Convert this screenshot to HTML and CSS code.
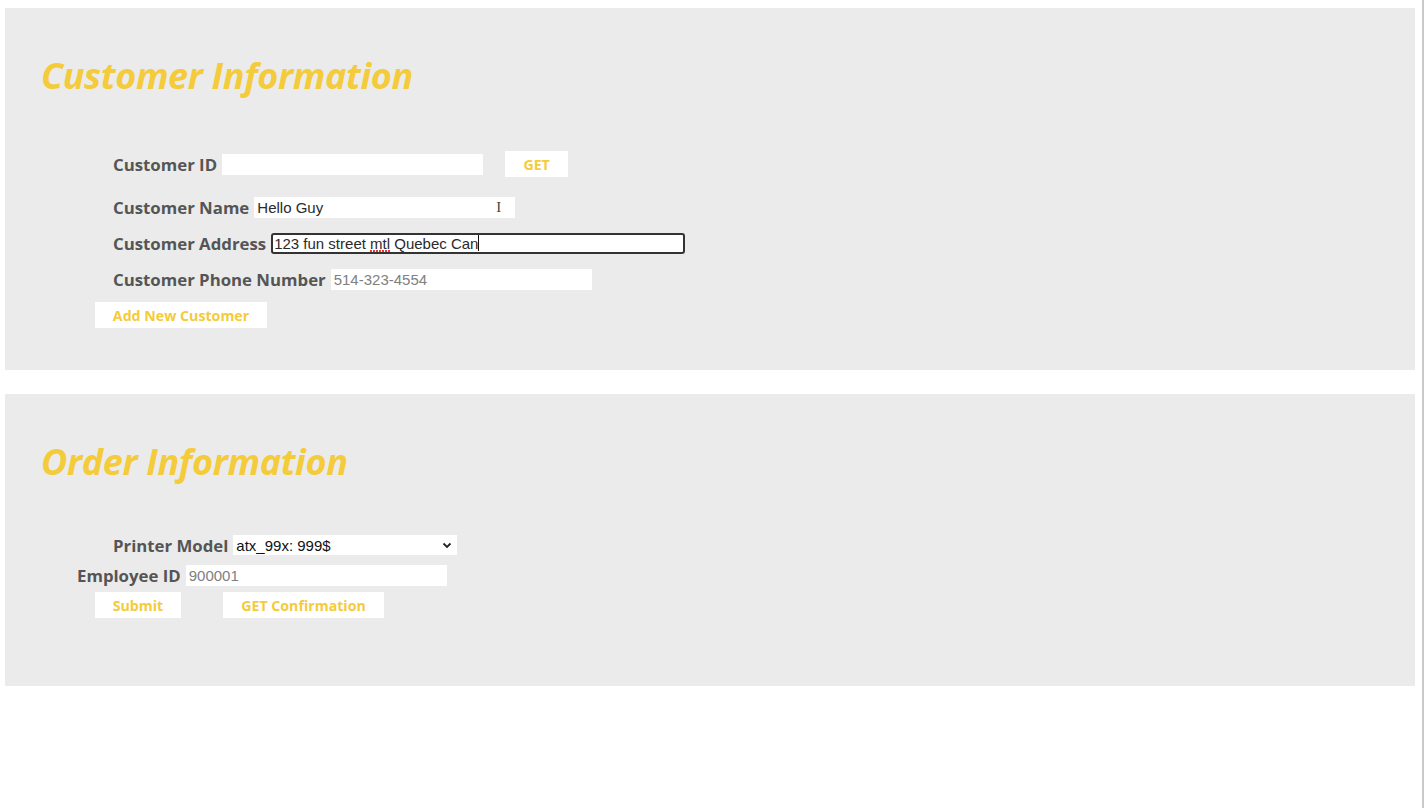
FILE: index.html
```html
<!DOCTYPE html>
<html>
<head>
<meta charset="utf-8">
<link rel="stylesheet" href="styles.css">
</head>
<body>
<div class="page">
  <section class="panel panel-customer">
    <h1 class="title">Customer Information</h1>
    <div class="form">
      <div class="row row-id">
        <label class="label">Customer ID</label>
        <input class="field" type="text">
        <button class="btn btn-get">GET</button>
      </div>
      <div class="row">
        <label class="label">Customer Name</label>
        <input class="field" type="text" value="Hello Guy">
        <span class="cursor">I</span>
      </div>
      <div class="row">
        <label class="label">Customer Address</label>
        <div class="field field-focus"><span class="txt">123 fun street&nbsp;</span><span class="spell">mtl</span><span class="txt">&nbsp;Quebec Can</span><span class="caret"></span></div>
      </div>
      <div class="row">
        <label class="label">Customer Phone Number</label>
        <input class="field" type="text" placeholder="514-323-4554">
      </div>
      <div class="row row-btn">
        <button class="btn btn-add">Add New Customer</button>
      </div>
    </div>
  </section>
  <section class="panel panel-order">
    <h1 class="title">Order Information</h1>
    <div class="form">
      <div class="row">
        <label class="label">Printer Model</label>
        <div class="select"><span>atx_99x: 999$</span>
          <svg class="chev" width="10" height="7" viewBox="0 0 10 7"><path d="M1.5 1.5 L5 5 L8.5 1.5" fill="none" stroke="#222" stroke-width="1.8"/></svg>
        </div>
      </div>
      <div class="row row-emp">
        <label class="label">Employee ID</label>
        <input class="field" type="text" placeholder="900001">
      </div>
      <div class="row row-btns">
        <button class="btn btn-submit">Submit</button>
        <button class="btn btn-confirm">GET Confirmation</button>
      </div>
    </div>
  </section>
</div>
</body>
</html>
```
FILE: styles.css
```css
html, body {
  margin: 0;
  padding: 0;
  background: #ffffff;
}
body {
  font-family: "Open Sans", "Noto Sans", sans-serif;
  width: 1424px;
  height: 808px;
  overflow: hidden;
}
.page {
  box-sizing: border-box;
  width: 1424px;
  height: 808px;
  padding: 8px 7px 0 5px;
  border-right: 2px solid #c9c9c9;
  display: flex;
  flex-direction: column;
  gap: 24px;
}
.panel {
  background: #ebebeb;
  box-sizing: border-box;
  padding: 0 0 0 36px;
}
.panel-customer { height: 362px; padding-top: 45px; }
.panel-order { height: 292px; padding-top: 45px; }
.title {
  margin: 0;
  font-family: "Open Sans", "Noto Sans", sans-serif;
  font-style: italic;
  font-weight: 700;
  font-size: 36px;
  line-height: 46px;
  color: #f4cb3a;
  letter-spacing: -0.35px;
}
.form {
  display: flex;
  flex-direction: column;
}
.panel-customer .form { margin-top: 47px; }
.panel-order .form { margin-top: 45px; }
.row {
  display: flex;
  align-items: center;
  padding-left: 72px;
  height: 36px;
}
.row-id { height: 36px; margin-bottom: 7px; }
.label {
  font-weight: 700;
  font-size: 16.8px;
  color: #555555;
  margin-right: 5px;
  white-space: nowrap;
}
.field {
  box-sizing: border-box;
  width: 261px;
  height: 21px;
  border: none;
  background: #ffffff;
  font-family: "Liberation Sans", Arial, sans-serif;
  font-size: 15px;
  color: #2a2a2a;
  padding: 0 3px;
  outline: none;
}
.field::placeholder { color: #808080; }
.field-focus {
  width: 414px;
  border: 2px solid #333;
  border-radius: 3px;
  display: flex;
  align-items: center;
  padding: 0 1px;
  white-space: pre;
}
.txt { line-height: 17px; }
.spell {
  line-height: 17px;
  padding-bottom: 0;
  background-image: radial-gradient(circle at 1px 1px, #e33 0.9px, transparent 1.1px);
  background-size: 3px 2px;
  background-repeat: repeat-x;
  background-position: 0 100%;
}
.caret {
  display: inline-block;
  width: 1px;
  height: 16px;
  background: #111;
}
.cursor {
  margin-left: -19px;
  font-family: "Liberation Serif", serif;
  font-size: 15px;
  color: #444;
  width: 19px;
}
.btn {
  border: none;
  background: #ffffff;
  font-family: "Open Sans", "Noto Sans", sans-serif;
  font-weight: 700;
  font-size: 14.2px;
  color: #f4cb3a;
  height: 26px;
  padding: 0;
  cursor: pointer;
}
.btn-get { width: 63px; margin-left: 22px; }
.row-btn { padding-left: 54px; }
.btn-add { width: 172px; }
.select {
  box-sizing: border-box;
  width: 224px;
  height: 20px;
  background: #fff;
  display: flex;
  align-items: center;
  justify-content: space-between;
  padding: 0 4px 0 3px;
  font-family: "Liberation Sans", Arial, sans-serif;
  font-size: 15px;
  color: #111;
}
.chev { margin-right: 1px; }
.panel-order .row { height: 30px; }
.row-emp { padding-left: 36px; }
.row-btns { padding-left: 54px; gap: 42px; }
.btn-submit { width: 86px; }
.btn-confirm { width: 161px; }
```
